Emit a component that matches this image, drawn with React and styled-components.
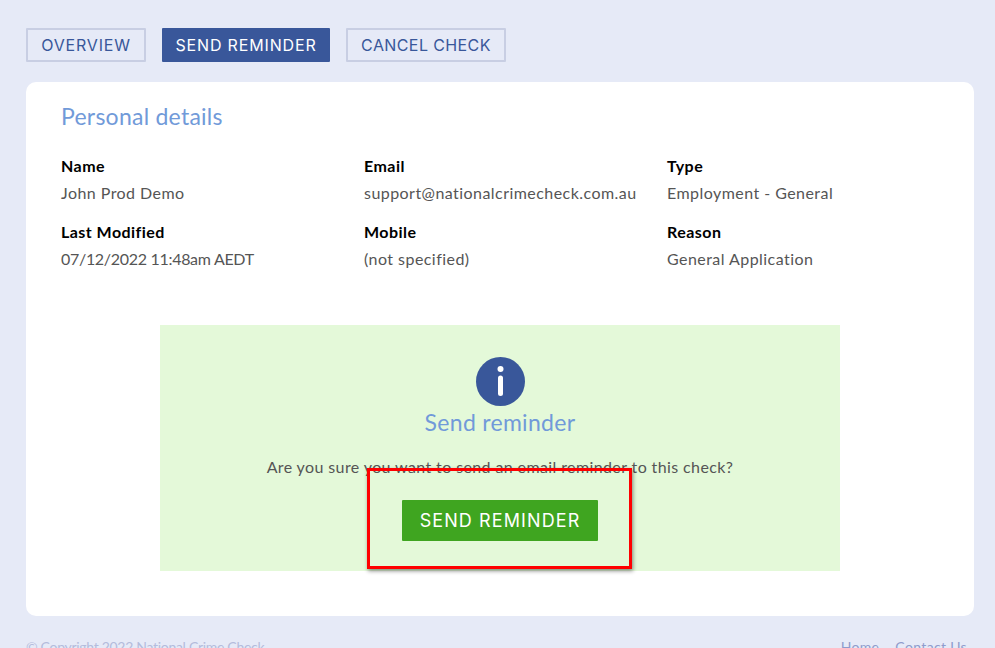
import React from "react";
import styled, { createGlobalStyle } from "styled-components";

const Global = createGlobalStyle`
  html, body { margin: 0; padding: 0; height: 648px; overflow: hidden; background: #e6eaf7; }
  body { font-family: "Lato", "Open Sans", sans-serif; color: #555; }
`;
const Page = styled.div`
  position: relative;
  height: 648px;
  overflow: hidden;
  padding: 28px 21px 0 26px;
  box-sizing: border-box;
`;
const Tabs = styled.nav`
  display: flex;
  gap: 16px;
  margin-bottom: 20px;
`;
const Tab = styled.button`
  box-sizing: border-box;
  width: ${p => p.$w}px;
  height: 34px;
  padding: 0;
  border: 2px solid ${p => (p.$active ? "#39579a" : "#c8cee3")};
  border-radius: 1px;
  background: ${p => (p.$active ? "#39579a" : "transparent")};
  color: ${p => (p.$active ? "#fff" : "#39579a")};
  font: 400 16px "Inter", sans-serif;
  letter-spacing: ${p => p.$track}px;
  white-space: nowrap;
`;
const Card = styled.section`
  box-sizing: border-box;
  height: 534px;
  background: #fff;
  border-radius: 10px;
  padding: 20px 35px 0;
`;
const Title = styled.h2`
  margin: 0 0 25px;
  font: 400 23px/29px "Lato", sans-serif;
  letter-spacing: 0.25px;
  color: #719ad9;
`;
const Details = styled.div`
  display: grid;
  grid-template-columns: repeat(3, 303px);
  row-gap: 12px;
`;
const Field = styled.div`
  display: flex;
  flex-direction: column;
  gap: 7px;
  height: 54px;
`;
const Label = styled.strong`
  font: 700 16px/20px "Lato", sans-serif;
  letter-spacing: 0.45px;
  color: #000;
`;
const Value = styled.span`
  font: 400 16px/20px "Lato", sans-serif;
  letter-spacing: ${p => (p.$numeric ? "-0.3px" : "0.45px")};
  color: #555;
  white-space: nowrap;
`;
const Panel = styled.div`
  box-sizing: border-box;
  width: 680px;
  height: 246px;
  margin: 49px auto 0;
  padding-top: 32px;
  background: #e4f9d9;
  display: flex;
  flex-direction: column;
  align-items: center;
`;
const PanelTitle = styled.h3`
  margin: 2px 0 0;
  font: 400 23px/29px "Lato", sans-serif;
  letter-spacing: 0.3px;
  color: #719ad9;
`;
const PanelText = styled.p`
  margin: 20px 0 0;
  font: 400 16px/20px "Lato", sans-serif;
  letter-spacing: 0.39px;
  color: #555;
`;
const Confirm = styled.button`
  width: 196px;
  height: 41px;
  margin-top: 23px;
  padding: 0;
  border: 0;
  border-radius: 1px;
  background: #3fa520;
  color: #fff;
  font: 400 18px "Inter", sans-serif;
  letter-spacing: 1.1px;
`;
const Highlight = styled.div`
  position: absolute;
  left: 367px;
  top: 468px;
  width: 265px;
  height: 101px;
  box-sizing: border-box;
  border: 3px solid #f00;
  box-shadow: 1px 2px 4px rgba(0, 0, 0, 0.45);
  pointer-events: none;
`;
const Footer = styled.footer`
  display: flex;
  justify-content: space-between;
  margin-top: 22px;
  font: 400 14px/18px "Lato", sans-serif;
  color: #b4bcdc;
`;
const Copy = styled.span`
  letter-spacing: -0.3px;
`;
const Links = styled.div`
  display: flex;
  gap: 16px;
  color: #8f9ccc;
  padding-right: 7px;
  letter-spacing: 0.35px;
`;
const Info = () => (
  <svg width="49" height="49" viewBox="0 0 49 49" aria-hidden="true">
    <circle cx="24.5" cy="24.5" r="24.5" fill="#39579a" />
    <circle cx="24.5" cy="12" r="3" fill="#fff" />
    <rect x="22" y="18.5" width="5" height="20.5" rx="2.5" fill="#fff" />
  </svg>
);
const fields = [
  ["Name", "John Prod Demo"],
  ["Email", "support@nationalcrimecheck.com.au"],
  ["Type", "Employment - General"],
  ["Last Modified", "07/12/2022 11:48am AEDT", true],
  ["Mobile", "(not specified)"],
  ["Reason", "General Application"],
];
export default function App() {
  return (
    <Page>
      <Global />
      <Tabs>
        <Tab $w={120} $track={0.8}>OVERVIEW</Tab>
        <Tab $w={168} $track={0.85} $active>SEND REMINDER</Tab>
        <Tab $w={160} $track={0.4}>CANCEL CHECK</Tab>
      </Tabs>
      <Card>
        <Title>Personal details</Title>
        <Details>
          {fields.map(([l, v, n]) => (
            <Field key={l}>
              <Label>{l}</Label>
              <Value $numeric={n}>{v}</Value>
            </Field>
          ))}
        </Details>
        <Panel>
          <Info />
          <PanelTitle>Send reminder</PanelTitle>
          <PanelText>Are you sure you want to send an email reminder to this check?</PanelText>
          <Confirm>SEND REMINDER</Confirm>
        </Panel>
      </Card>
      <Footer>
        <Copy>© Copyright 2022 National Crime Check</Copy>
        <Links><span>Home</span><span>Contact Us</span></Links>
      </Footer>
      <Highlight />
    </Page>
  );
}
